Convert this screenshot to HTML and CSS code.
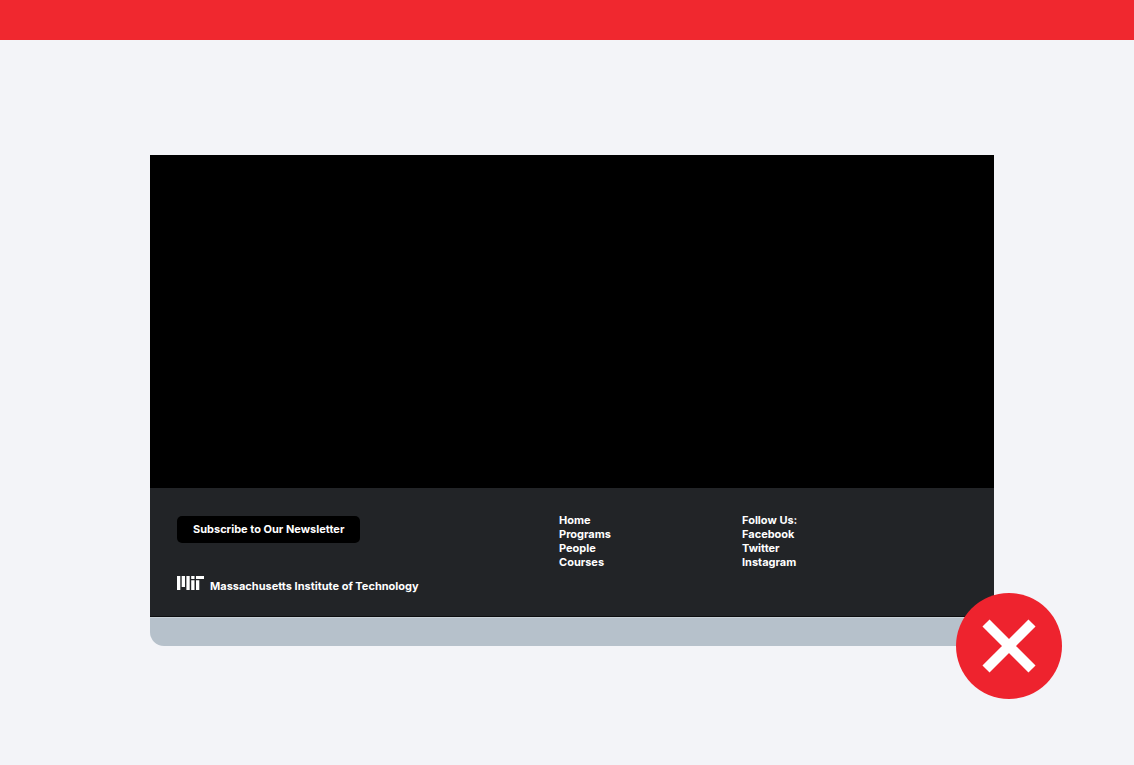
FILE: index.html
```html
<!DOCTYPE html>
<html lang="en">
<head>
<meta charset="utf-8">
<title>Footer example</title>
<link rel="stylesheet" href="styles.css">
</head>
<body>
<div class="status-bar"></div>
<main class="stage">
  <div class="example">
    <div class="preview"></div>
    <footer class="footer">
      <div class="brand">
        <button class="subscribe" type="button">Subscribe to Our Newsletter</button>
        <a class="logo" href="#">
          <svg class="logo-mark" viewBox="0 0 54 28" aria-hidden="true">
            <path d="M0 0h6.6v28H0zM9.4 0h6.6v22H9.4zM18.8 0h6.6v28h-6.6zM28.4 0h6.6v6h-6.6zM28.4 8.4h6.6V28h-6.6zM38 0h16v6H38zM38 8.4h6.6V28H38z"/>
          </svg>
          <span class="logo-name">Massachusetts Institute of Technology</span>
        </a>
      </div>
      <nav class="links" aria-label="Site">
        <a href="#">Home</a>
        <a href="#">Programs</a>
        <a href="#">People</a>
        <a href="#">Courses</a>
      </nav>
      <nav class="links" aria-label="Social">
        <span>Follow Us:</span>
        <a href="#">Facebook</a>
        <a href="#">Twitter</a>
        <a href="#">Instagram</a>
      </nav>
    </footer>
    <div class="base"></div>
    <svg class="verdict" viewBox="0 0 106 106" role="img" aria-label="Incorrect">
      <circle cx="53" cy="53" r="53" fill="#ee232e"/>
      <path d="M30 30l46 46M76 30L30 76" stroke="#fff" stroke-width="10"/>
    </svg>
  </div>
</main>
</body>
</html>
```
FILE: styles.css
```css
* {
  box-sizing: border-box;
}

body {
  margin: 0;
  background: #f3f4f8;
  color: #fff;
  font-family: Inter, "Liberation Sans", Arial, sans-serif;
  font-size: 11px;
  font-weight: 700;
}

a {
  color: inherit;
  text-decoration: none;
}

.status-bar {
  height: 40px;
  background: #f0282f;
}

.stage {
  padding: 115px 140px 115px 150px;
}

.example {
  position: relative;
}

.preview {
  height: 333px;
  background: #000;
}

.footer {
  display: grid;
  grid-template-columns: 382fr 183fr 224fr;
  padding: 25px 28px 23px 27px;
  background: #222427;
  border-bottom: 1px solid #0d0e10;
}

.brand {
  display: flex;
  flex-direction: column;
  align-items: flex-start;
  gap: 33px;
  padding-top: 3px;
}

.subscribe {
  padding: 6px 16px 7px;
  border: 0;
  border-radius: 5px;
  background: #000;
  color: inherit;
  font: inherit;
  line-height: 14px;
}

.logo {
  display: flex;
  align-items: flex-start;
  gap: 6px;
  white-space: nowrap;
}

.logo-mark {
  width: 27px;
  height: 14px;
  fill: #fff;
}

.logo-name {
  padding-top: 3px;
  line-height: 14px;
}

.links {
  display: flex;
  flex-direction: column;
  align-items: flex-start;
  line-height: 14px;
}

.base {
  height: 29px;
  background: #b6c1cb;
  border-top: 1px solid #c9d1d8;
  border-radius: 0 0 14px 14px;
}

.verdict {
  position: absolute;
  right: -68px;
  bottom: -53px;
  width: 106px;
  height: 106px;
}
```
